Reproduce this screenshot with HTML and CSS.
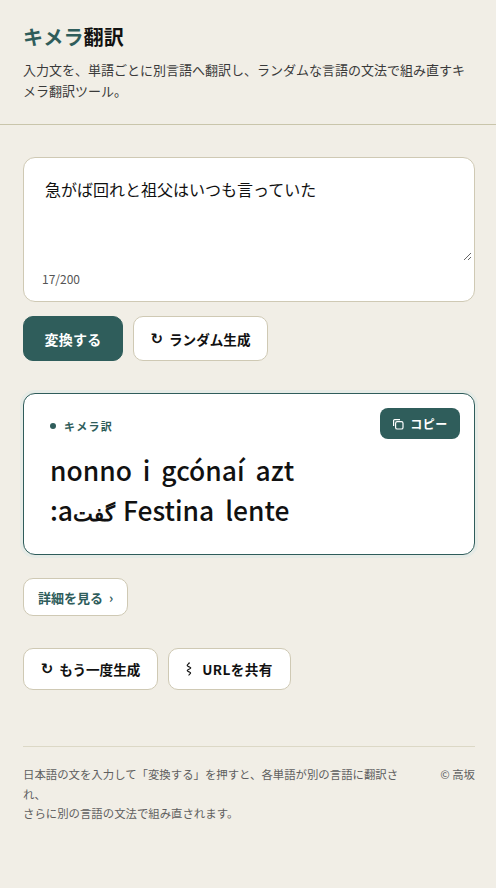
FILE: index.html
```html
<!DOCTYPE html>
<html lang="ja">
<head>
  <meta charset="UTF-8">
  <meta name="viewport" content="width=device-width, initial-scale=1.0">
  <title>キメラ翻訳</title>
  <link rel="stylesheet" href="styles.css">
</head>
<body>
  <header class="site-header">
    <h1><span class="accent">キメラ</span>翻訳</h1>
    <p>入力文を、単語ごとに別言語へ翻訳し、ランダムな言語の文法で組み直すキメラ翻訳ツール。</p>
  </header>

  <main class="main">
    <div class="input-card">
      <textarea class="input-text">急がば回れと祖父はいつも言っていた</textarea>
      <div class="count">17/200</div>
    </div>

    <div class="actions">
      <button class="btn btn-primary">変換する</button>
      <button class="btn btn-secondary"><span class="icon">↻</span>ランダム生成</button>
    </div>

    <section class="result-card">
      <div class="label"><span class="dot"></span>キメラ訳</div>
      <button class="copy-btn">
        <svg width="12" height="12" viewBox="0 0 12 12" fill="none" stroke="currentColor" stroke-width="1.2">
          <rect x="3.6" y="3.6" width="7.4" height="7.4" rx="1.6"/>
          <path d="M1.6 8V2.6a1 1 0 0 1 1-1H8"/>
        </svg>
        コピー
      </button>
      <p class="result-text">nonno i gcónaí azt<br>:a<span class="arabic">گفت</span> Festina lente</p>
    </section>

    <button class="btn-details">詳細を見る<span class="chevron">›</span></button>

    <div class="actions actions-lower">
      <button class="btn btn-small"><span class="icon">↻</span>もう一度生成</button>
      <button class="btn btn-small btn-share">
        <svg class="share-icon" width="6" height="14" viewBox="0 0 6 14" fill="none" stroke="currentColor" stroke-width="1.2">
          <path d="M3.5 .5C3 2 1 2.5 1.2 3.6S5 5 4.8 6 1 7.5 1.2 8.6 4.8 10 4.6 11 2.5 12.5 3 13.5"/>
        </svg>
        URLを共有
      </button>
    </div>

    <footer class="site-footer">
      <p>日本語の文を入力して「変換する」を押すと、各単語が別の言語に翻訳され、<br>さらに別の言語の文法で組み直されます。</p>
      <span class="copyright">© 高坂</span>
    </footer>
  </main>
</body>
</html>
```

FILE: styles.css
```css
* {
    box-sizing: border-box;
}
body {
    margin: 0;
    background: #f1eee6;
    color: #111;
    font-family: "Noto Sans CJK JP", "Noto Sans", sans-serif;
}
button {
    font-family: inherit;
    cursor: pointer;
}
.site-header {
    padding: 22px 23px 23px;
    border-bottom: 1px solid #c9c5ab;
}
.site-header h1 {
    margin: 0 0 7px;
    font-size: 20px;
    line-height: 30px;
    font-weight: 700;
    letter-spacing: .01em;
}
.accent {
    color: #2f5d5b;
}
.site-header p {
    margin: 0;
    font-size: 13px;
    line-height: 21px;
    color: #3a3a3a;
}
.main {
    padding: 32px 21px 0 23px;
}
.input-card {
    height: 145px;
    padding: 9px 2px 0 18px;
    background: #fff;
    border: 1px solid #cfc9b4;
    border-radius: 12px;
}
.input-text {
    display: block;
    width: 100%;
    height: 94px;
    padding: 10px 3px;
    border: 0;
    outline: 0;
    background: transparent;
    color: #111;
    font-family: inherit;
    font-size: 16px;
    line-height: 24px;
    resize: vertical;
}
.count {
    margin-top: 9px;
    font-size: 12px;
    line-height: 18px;
    color: #555;
}
.actions {
    display: flex;
    gap: 10px;
    margin-top: 14px;
}
.btn {
    display: flex;
    align-items: center;
    justify-content: center;
    height: 45px;
    padding: 0 16px;
    border-radius: 10px;
    font-size: 13.6px;
    font-weight: 700;
    color: #111;
}
.btn-primary {
    width: 100px;
    background: #2f5d5b;
    border: 1px solid #2f5d5b;
    color: #fff;
    font-size: 14px;
    letter-spacing: .02em;
}
.btn-secondary {
    width: 135px;
    padding: 0;
    background: #fff;
    border: 1px solid #cfc9b4;
}
.icon {
    margin-right: 6px;
    font-size: 15px;
    font-family: "DejaVu Sans", sans-serif;
}
.result-card {
    position: relative;
    height: 162px;
    margin-top: 32px;
    padding: 23px 26px 0;
    background: #fff;
    border: 1px solid #2f5d5b;
    border-radius: 12px;
    box-shadow: 0 0 0 3px #e6ebe6;
}
.label {
    display: flex;
    align-items: center;
    font-size: 11px;
    line-height: 18px;
    font-weight: 700;
    letter-spacing: 1.25px;
    color: #2f5d5b;
}
.dot {
    width: 6px;
    height: 6px;
    margin-right: 8px;
    border-radius: 50%;
    background: #2f5d5b;
}
.copy-btn {
    position: absolute;
    top: 14px;
    right: 14px;
    display: flex;
    align-items: center;
    justify-content: center;
    gap: 6px;
    width: 80px;
    height: 31px;
    padding: 0;
    border: 0;
    border-radius: 8px;
    background: #2f5d5b;
    color: #fff;
    font-size: 12px;
    font-weight: 700;
    letter-spacing: .04em;
}
.result-text {
    margin: 15px 0 0;
    font-size: 26.4px;
    line-height: 40px;
    font-weight: 500;
    word-spacing: 5px;
}
.arabic {
    margin-right: -3px;
    font-size: 20.5px;
    font-weight: 700;
}
.btn-details {
    display: block;
    width: 105px;
    height: 38px;
    margin-top: 23px;
    padding: 0;
    background: #fff;
    border: 1px solid #cfc9b4;
    border-radius: 10px;
    color: #2f5d5b;
    font-size: 13px;
    font-weight: 700;
}
.chevron {
    margin-left: 6px;
}
.actions-lower {
    margin-top: 32px;
}
.btn-small {
    height: 42px;
    background: #fff;
    border: 1px solid #cfc9b4;
}
.btn-small:first-child {
    width: 135px;
    padding: 0;
}
.btn-share {
    width: 123px;
    padding: 0;
    letter-spacing: .03em;
}
.share-icon {
    margin-right: 10px;
}
.site-footer {
    display: flex;
    justify-content: space-between;
    gap: 36px;
    margin-top: 56px;
    padding-top: 18px;
    border-top: 1px solid #dcd8c6;
    font-size: 11.4px;
    line-height: 19.5px;
    color: #5f5f5f;
}
.site-footer p {
    margin: 0;
    flex: 1;
}
.copyright {
    white-space: nowrap;
}
```
